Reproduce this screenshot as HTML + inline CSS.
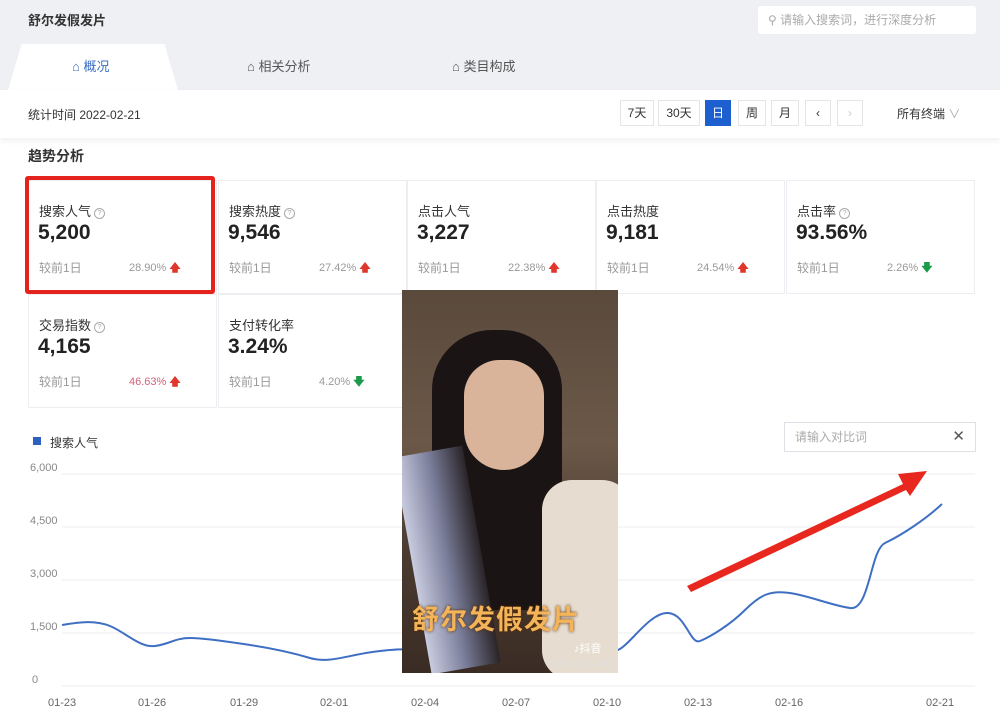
<!DOCTYPE html><html><head><meta charset="utf-8"><style>
body{margin:0;width:1000px;height:727px;overflow:hidden;background:#fff;font-family:"Liberation Sans","Noto Sans CJK SC",sans-serif;color:#333;position:relative}
.a{position:absolute}
.top{left:0;top:0;width:1000px;height:90px;background:#eef0f4}
.card{position:absolute;width:189px;height:114px;border:1px solid #eceef2;box-sizing:border-box;background:#fff}
.card .t{position:absolute;left:10px;top:20px;font-size:13px;color:#333}
.card .v{position:absolute;left:9px;top:40px;font-size:21px;font-weight:bold;color:#222}
.card .c{position:absolute;left:10px;top:78px;font-size:12px;color:#999}
.card .p{position:absolute;left:100px;top:78px;font-size:11px;color:#999}
.q{display:inline-block;width:9px;height:9px;border:1px solid #aaa;border-radius:50%;font-size:7px;line-height:9px;text-align:center;color:#aaa;vertical-align:1px;margin-left:3px}
.up{color:#e0362b}.dn{color:#1a9a4a}
.btn{position:absolute;top:100px;height:26px;border:1px solid #e3e5e9;box-sizing:border-box;font-size:12px;line-height:24px;text-align:center;background:#fff}
.yl{position:absolute;left:30px;font-size:11px;color:#888}
.xl{position:absolute;top:697px;font-size:11px;color:#666}
</style></head><body>
<div class="a top"></div>
<div class="a" style="left:28px;top:10px;font-size:13px;font-weight:bold">舒尔发假发片</div>
<div class="a" style="left:758px;top:6px;width:218px;height:28px;background:#fff;border-radius:3px;font-size:12px;color:#aaa;line-height:28px;text-indent:10px">⚲ 请输入搜索词，进行深度分析</div>
<div class="a" style="left:8px;top:44px;width:170px;height:46px;background:#fff;clip-path:polygon(8% 0,92% 0,100% 100%,0 100%)"></div>
<div class="a" style="left:72px;top:56px;font-size:13px;color:#3b6fc4">⌂ 概况</div>
<div class="a" style="left:247px;top:56px;font-size:13px;color:#555">⌂ 相关分析</div>
<div class="a" style="left:452px;top:56px;font-size:13px;color:#555">⌂ 类目构成</div>
<div class="a" style="left:0;top:90px;width:1000px;height:48px;background:#fff;box-shadow:0 3px 6px rgba(0,0,0,.06)"></div>
<div class="a" style="left:28px;top:106px;font-size:12px">统计时间 2022-02-21</div>
<div class="btn" style="left:620px;width:34px">7天</div>
<div class="btn" style="left:658px;width:42px">30天</div>
<div class="btn" style="left:705px;width:26px;background:#1e5fd0;color:#fff;border-color:#1e5fd0">日</div>
<div class="btn" style="left:738px;width:28px">周</div>
<div class="btn" style="left:771px;width:28px">月</div>
<div class="btn" style="left:805px;width:26px">‹</div>
<div class="btn" style="left:837px;width:26px;color:#ccc">›</div>
<div class="a" style="left:897px;top:105px;font-size:12px">所有终端 <span style="color:#aaa">∨</span></div>
<div class="a" style="left:28px;top:146px;font-size:14px;font-weight:bold">趋势分析</div>
<div class="card" style="left:28px;top:180px"><div class="t">搜索人气<span class="q">?</span></div><div class="v">5,200</div><div class="c">较前1日</div><div class="p">28.90% <b class="up">🡅</b></div></div>
<div class="card" style="left:218px;top:180px"><div class="t">搜索热度<span class="q">?</span></div><div class="v">9,546</div><div class="c">较前1日</div><div class="p">27.42% <b class="up">🡅</b></div></div>
<div class="card" style="left:407px;top:180px"><div class="t">点击人气</div><div class="v">3,227</div><div class="c">较前1日</div><div class="p">22.38% <b class="up">🡅</b></div></div>
<div class="card" style="left:596px;top:180px"><div class="t">点击热度</div><div class="v">9,181</div><div class="c">较前1日</div><div class="p">24.54% <b class="up">🡅</b></div></div>
<div class="card" style="left:786px;top:180px"><div class="t">点击率<span class="q">?</span></div><div class="v">93.56%</div><div class="c">较前1日</div><div class="p">2.26% <b class="dn">🡇</b></div></div>
<div class="card" style="left:28px;top:294px"><div class="t">交易指数<span class="q">?</span></div><div class="v">4,165</div><div class="c">较前1日</div><div class="p" style="color:#d0607a">46.63% <b class="up">🡅</b></div></div>
<div class="card" style="left:218px;top:294px"><div class="t">支付转化率</div><div class="v">3.24%</div><div class="c">较前1日</div><div class="p">4.20% <b class="dn">🡇</b></div></div>
<div class="a" style="left:25px;top:176px;width:190px;height:118px;border:4px solid #e5231d;border-radius:3px;box-sizing:border-box"></div>
<div class="a" style="left:33px;top:437px;width:8px;height:8px;background:#2b5fc0"></div>
<div class="a" style="left:50px;top:434px;font-size:12px">搜索人气</div>
<div class="a" style="left:784px;top:422px;width:192px;height:30px;border:1px solid #dde0e5;box-sizing:border-box;font-size:12px;color:#aaa;line-height:28px;text-indent:10px">请输入对比词<span style="position:absolute;right:10px;color:#555;font-size:15px">✕</span></div>
<div class="yl" style="top:462px">6,000</div><div class="yl" style="top:515px">4,500</div><div class="yl" style="top:568px">3,000</div><div class="yl" style="top:621px">1,500</div><div class="yl" style="top:674px;left:32px">0</div>
<svg class="a" style="left:0;top:0" width="1000" height="727">
<g stroke="#eceef1"><line x1="62" y1="474" x2="975" y2="474"/><line x1="62" y1="527" x2="975" y2="527"/><line x1="62" y1="580" x2="975" y2="580"/><line x1="62" y1="633" x2="975" y2="633"/><line x1="62" y1="686" x2="975" y2="686"/></g>
<path d="M62 625 C80 622 95 620 110 626 S140 648 155 646 S175 638 190 638 S230 642 250 645 S290 652 310 658 S350 654 380 651 S400 650 420 650 L618 650 C630 645 650 612 668 613 S690 645 700 641 S730 625 745 610 S770 590 790 593 S830 605 850 608 S870 550 885 543 S925 520 942 504" fill="none" stroke="#3f6fc3" stroke-width="2"/>
<path d="M687 586 L903 484 L898 474 L927 471 L910 496 L906 490 L691 592Z" fill="#e8281f"/>
</svg>
<div class="xl" style="left:48px">01-23</div><div class="xl" style="left:138px">01-26</div><div class="xl" style="left:230px">01-29</div><div class="xl" style="left:320px">02-01</div><div class="xl" style="left:411px">02-04</div><div class="xl" style="left:502px">02-07</div><div class="xl" style="left:593px">02-10</div><div class="xl" style="left:684px">02-13</div><div class="xl" style="left:775px">02-16</div><div class="xl" style="left:926px">02-21</div>
<div class="a" style="left:402px;top:290px;width:216px;height:383px;background:linear-gradient(180deg,#5a4a3c 0%,#6b5848 40%,#4a3a30 70%,#3a2c24 100%);overflow:hidden">
<div class="a" style="left:30px;top:40px;width:130px;height:280px;background:#1a1414;border-radius:60px 60px 20px 20px"></div>
<div class="a" style="left:62px;top:70px;width:80px;height:110px;background:#d9b49a;border-radius:40px 40px 45px 45px"></div>
<div class="a" style="left:10px;top:160px;width:70px;height:220px;background:linear-gradient(90deg,#c9cce0,#7a7e9a,#2a2428);transform:rotate(-10deg)"></div>
<div class="a" style="left:140px;top:190px;width:90px;height:200px;background:#e6ddd0;border-radius:30px"></div>
<div class="a" style="left:10px;top:308px;font-size:27px;font-weight:bold;color:#f3b45a;letter-spacing:1px;text-shadow:0 0 3px #5a2a00">舒尔发假发片</div>
<div class="a" style="left:172px;top:350px;font-size:11px;color:#fff">♪抖音</div>
<div class="a" style="left:145px;top:368px;font-size:8px;color:#ddd">抖音号：22054502</div>
</div>
</body></html>
